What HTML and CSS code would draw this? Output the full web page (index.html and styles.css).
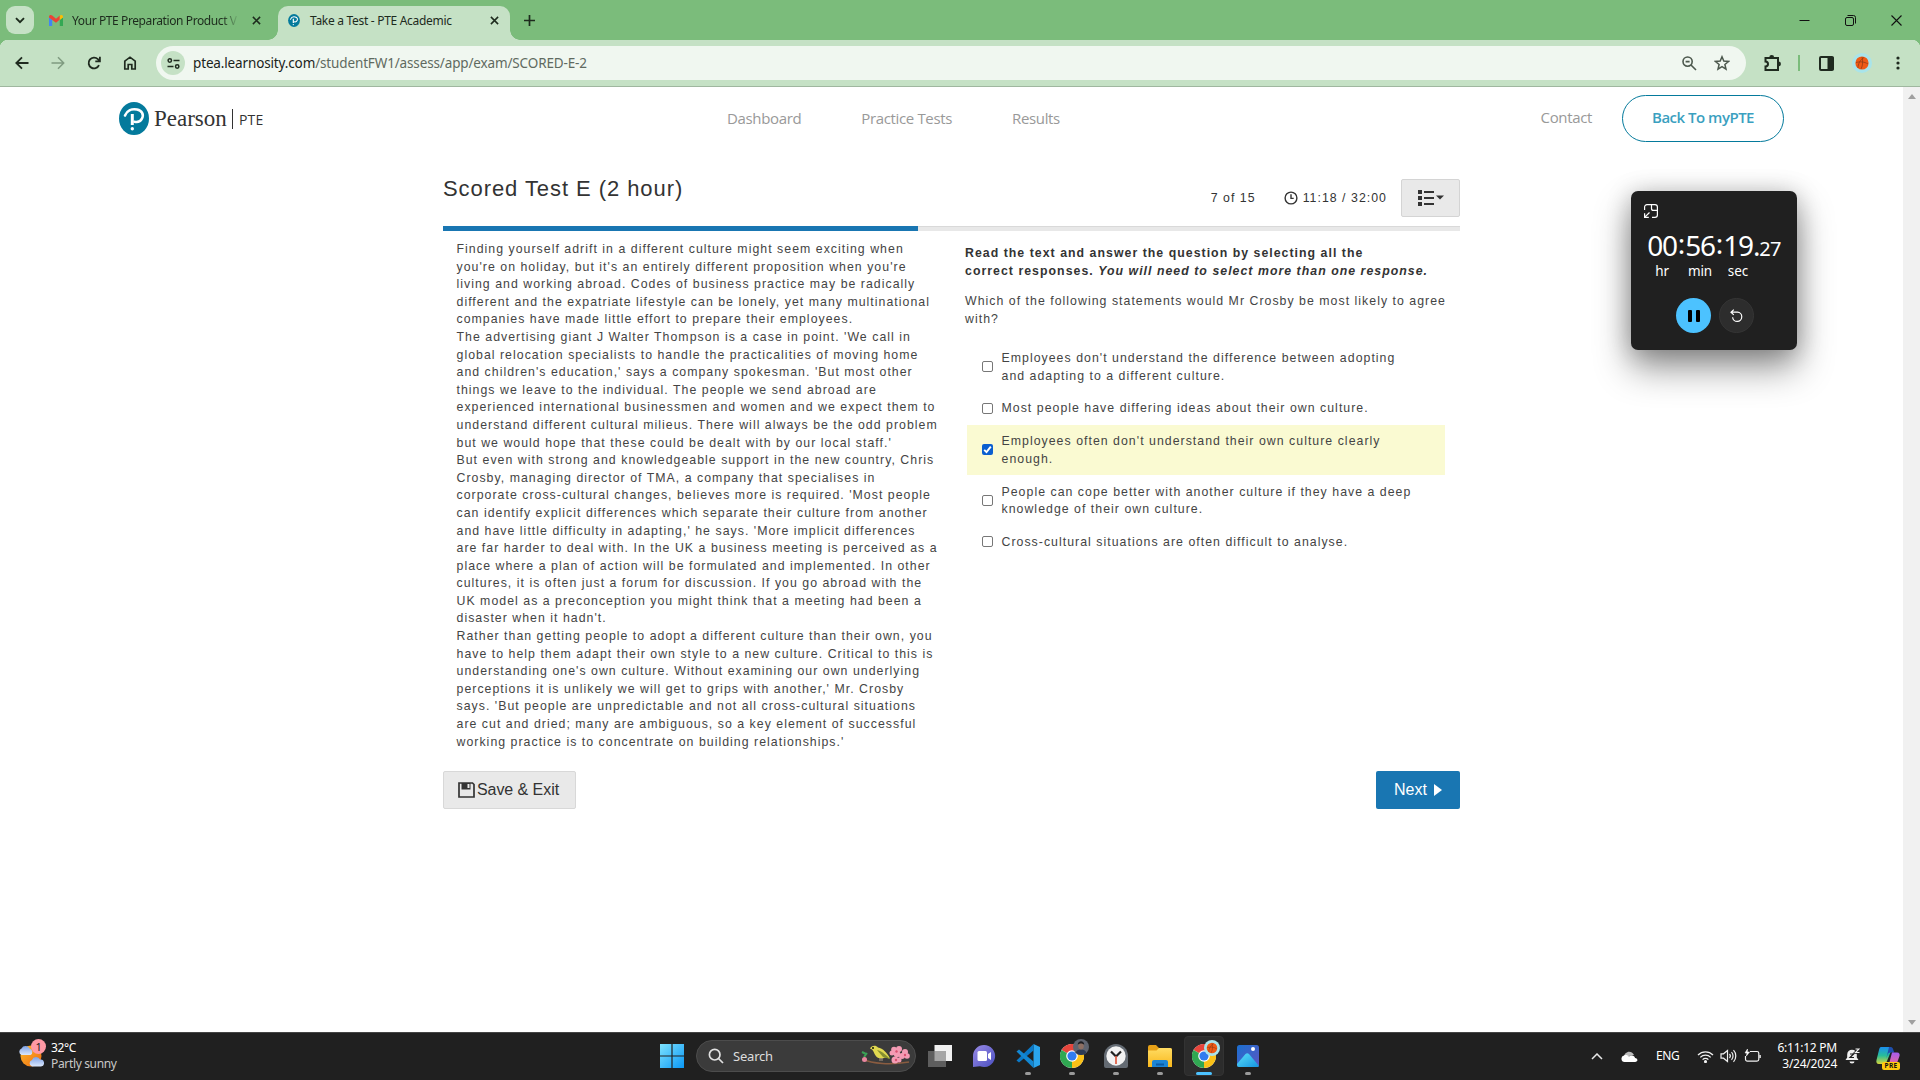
FILE: index.html
```html
<!DOCTYPE html>
<html lang="en">
<head>
<meta charset="utf-8">
<title>Take a Test - PTE Academic</title>
<link rel="stylesheet" href="styles.css">
</head>
<body>
<svg width="0" height="0" class="defs" aria-hidden="true">
  <defs>
    <linearGradient id="win" x1="0" y1="0" x2="1" y2="1"><stop offset="0" stop-color="#7ee3ff"/><stop offset="1" stop-color="#0a97f5"/></linearGradient>
    <linearGradient id="sun" x1="0" y1="0" x2="1" y2="1"><stop offset="0" stop-color="#fdbb2c"/><stop offset="1" stop-color="#ee6a10"/></linearGradient>
    <linearGradient id="cloud" x1="0" y1="0" x2="0" y2="1"><stop offset="0" stop-color="#7ea2e6"/><stop offset="1" stop-color="#dce8fc"/></linearGradient>
    <linearGradient id="chat" x1="0" y1="0" x2="1" y2="1"><stop offset="0" stop-color="#9a8be6"/><stop offset="1" stop-color="#4a4fc0"/></linearGradient>
    <linearGradient id="folder" x1="0" y1="0" x2="0" y2="1"><stop offset="0" stop-color="#ffdc63"/><stop offset="1" stop-color="#f9b81c"/></linearGradient>
    <linearGradient id="photo" x1="0" y1="0" x2="1" y2="1"><stop offset="0" stop-color="#1a6fd0"/><stop offset="1" stop-color="#5d56c0"/></linearGradient>
    <linearGradient id="hill" x1="0" y1="0" x2="1" y2="1"><stop offset="0" stop-color="#5be0fa"/><stop offset="1" stop-color="#1593e0"/></linearGradient>
    <linearGradient id="copA" x1="0" y1="0" x2="0" y2="1"><stop offset="0" stop-color="#1b8ff0"/><stop offset=".5" stop-color="#27bd9a"/><stop offset="1" stop-color="#d6d63a"/></linearGradient>
    <linearGradient id="copB" x1="0" y1="0" x2="0" y2="1"><stop offset="0" stop-color="#a45cf0"/><stop offset="1" stop-color="#f36a8c"/></linearGradient>
    <symbol id="x" viewBox="0 0 10 10"><path d="M1 1l8 8M9 1l-8 8" fill="none" stroke="currentColor" stroke-width="1.7"/></symbol>
    <symbol id="pearson" viewBox="0 0 30 33"><ellipse cx="15" cy="16.5" rx="15" ry="16.5" fill="#047a9c"/><path d="M6 13.500C8 8.500 13 6.500 18 7.500c5 1 7 5 5 9-1.500 3-4.500 4-7.500 3.300" fill="none" stroke="#fff" stroke-width="2.600" stroke-linecap="round"/><path d="M13.300 12v11" stroke="#fff" stroke-width="3"/><circle cx="13.300" cy="26.800" r="1.700" fill="#fff"/></symbol>
    <symbol id="chrome" viewBox="0 0 24 24"><circle cx="12" cy="12" r="12" fill="#fff"/><path d="M12 12L1.600 6A12 12 0 0 1 22.400 6z" fill="#e8453c"/><path d="M12 12L22.400 6A12 12 0 0 1 12 24z" fill="#fbc116"/><path d="M12 12L12 24A12 12 0 0 1 1.600 6z" fill="#30a852"/><circle cx="12" cy="12" r="5.800" fill="#fff"/><circle cx="12" cy="12" r="4.600" fill="#2f7cf0"/></symbol>
    <symbol id="ball" viewBox="0 0 20 20"><circle cx="10" cy="10" r="10" fill="#a9e4ea"/><circle cx="10" cy="10" r="6.600" fill="#f05a14"/><path d="M4 9.500c4-1 8-1 12 1.500M10 4c1 4 1 8-1 12M6 15c0-4 2-8 6-10.500" fill="none" stroke="#8a3a14" stroke-width=".7"/></symbol>
  </defs>
</svg>

<header class="tabs">
  <button class="tab-search"><svg width="10" height="7" viewBox="0 0 10 7"><path d="M1 1.200l4 4 4-4" fill="none" stroke="#1d2b1d" stroke-width="1.900"/></svg></button>
  <div class="tab">
    <svg width="14" height="11" viewBox="0 0 14 11"><path d="M0 2.500V11h3.200V4.500z" fill="#4285f4"/><path d="M14 2.500V11h-3.200V4.500z" fill="#34a853"/><path d="M0 1.800C0 0 2-.5 3.200.6L7 3.700 10.800.6V4.600L7 7.700 0 2.600z" fill="#ea4335"/><path d="M10.800.6C12-.5 14 0 14 1.800v.8l-3.200 2.300z" fill="#fbbc04"/></svg>
    <span class="tab-title fade">Your PTE Preparation Product V</span>
    <svg class="close" width="9" height="9"><use href="#x"/></svg>
  </div>
  <div class="tab active">
    <svg width="12" height="13"><use href="#pearson"/></svg>
    <span class="tab-title">Take a Test - PTE Academic</span>
    <svg class="close" width="9" height="9"><use href="#x"/></svg>
  </div>
  <svg class="new-tab" width="11" height="11" viewBox="0 0 11 11"><path d="M5.500 0v11M0 5.500h11" stroke="#1d2b1d" stroke-width="1.700"/></svg>
  <div class="window-buttons">
    <svg width="11" height="11"><path d="M.5 5.500h10" stroke="#111"/></svg>
    <svg width="11" height="11" fill="none" stroke="#111"><rect x=".5" y="2.500" width="8" height="8" rx="1.500"/><path d="M2.500 .5h6a2 2 0 0 1 2 2v6"/></svg>
    <svg width="11" height="11"><path d="M.5 .5l10 10M10.500 .5l-10 10" stroke="#111" stroke-width="1.100"/></svg>
  </div>
</header>

<nav class="toolbar">
  <div class="nav-icons">
    <svg width="14" height="14" viewBox="0 0 14 14" fill="none" stroke="#1f2a1f" stroke-width="1.800"><path d="M13.500 7H1.500M7 1.300L1.300 7 7 12.700"/></svg>
    <svg width="14" height="14" viewBox="0 0 14 14" fill="none" stroke="#7f9b80" stroke-width="1.500"><path d="M.5 7h12M7 1.300L12.700 7 7 12.700"/></svg>
    <svg width="14" height="14" viewBox="0 0 14 14" fill="none" stroke="#1f2a1f" stroke-width="1.800"><path d="M12 9.200A5.400 5.400 0 1 1 10.900 3.200L12.600 5M12.900.8v4.600H8.300"/></svg>
    <svg width="14" height="14" viewBox="0 0 14 14" fill="none" stroke="#1f2a1f" stroke-width="1.700"><path d="M1.800 5.200L7 1.200l5.200 4V13H8.800V8.500H5.200V13H1.800z"/></svg>
  </div>
  <div class="omnibox">
    <span class="site-chip"><svg width="13" height="11" viewBox="0 0 13 11" fill="none" stroke="#1f2a1f" stroke-width="1.500"><circle cx="2.800" cy="2.500" r="1.700"/><path d="M6.500 2.500h6M.5 8.500h6"/><circle cx="10.200" cy="8.500" r="1.700"/></svg></span>
    <span class="url"><b>ptea.learnosity.com</b>/studentFW1/assess/app/exam/SCORED-E-2</span>
    <svg class="glass" width="15" height="15" viewBox="0 0 15 15" fill="none" stroke="#4c584d" stroke-width="1.600"><circle cx="5.600" cy="5.600" r="4.600"/><path d="M9 9l5 5M3.600 5.600h4"/></svg>
    <svg class="star" width="16" height="16" viewBox="0 0 16 16" fill="none" stroke="#4c584d" stroke-width="1.500"><path d="M8 1.800l1.800 4.300 4.700.4-3.600 3 1.100 4.600L8 11.700l-4 2.400 1.100-4.600-3.600-3 4.700-.4z"/></svg>
  </div>
  <div class="actions">
    <svg width="17" height="17" viewBox="0 0 17 17" fill="none" stroke="#1f2a1f" stroke-width="2"><path d="M1.500 3h12.500v12H1.500v-3.500a2.300 2.300 0 0 0 0-5z"/><path d="M6 2.500a1.700 1.700 0 0 1 3.400 0M14.500 7.300a1.700 1.700 0 0 1 0 3.400" fill="#1f2a1f" stroke-width="1.500"/></svg>
    <i class="rule"></i>
    <svg class="panel" width="15" height="15" viewBox="0 0 15 15"><rect x="1" y="1" width="13" height="13" rx="1" fill="none" stroke="#1f2a1f" stroke-width="2"/><path d="M8.500 1h6v13h-6z" fill="#1f2a1f"/></svg>
    <svg class="profile" width="20" height="20"><use href="#ball"/></svg>
    <svg class="more" width="4" height="14" fill="#1f2a1f"><circle cx="2" cy="2" r="1.600"/><circle cx="2" cy="7" r="1.600"/><circle cx="2" cy="12" r="1.600"/></svg>
  </div>
</nav>

<div class="viewport">
  <div class="page">
    <div class="site-header">
      <div class="brand"><svg width="30" height="33"><use href="#pearson"/></svg><span class="brand-name">Pearson</span><i></i><span class="brand-sub">PTE</span></div>
      <div class="links"><a>Dashboard</a><a>Practice Tests</a><a>Results</a></div>
      <div class="side-links"><a class="contact">Contact</a><a class="pill">Back To myPTE</a></div>
    </div>

    <main class="exam">
      <div class="exam-head">
        <h1>Scored Test E (2 hour)</h1>
        <div class="status">
          <span class="count">7 of 15</span>
          <span class="time"><svg width="14" height="14" viewBox="0 0 14 14" fill="none" stroke="#333" stroke-width="1.400"><circle cx="7" cy="7" r="5.900"/><path d="M7 3.300V7.400H9.700"/></svg><span>11:18 / 32:00</span></span>
          <button class="menu"><svg width="26" height="16" viewBox="0 0 26 16" fill="#333"><path d="M0 0h4v4H0zM0 6h4v4H0zM0 12h4v4H0zM6 1h10v2H6zM6 7h10v2H6zM6 13h10v2H6zM18 5.500h8l-4 4z"/></svg></button>
        </div>
      </div>
      <div class="progress"><div style="width:46.7%"></div></div>
      <div class="columns">
        <div class="passage">
          <p>Finding yourself adrift in a different culture might seem exciting when<br>you're on holiday, but it's an entirely different proposition when you're<br>living and working abroad. Codes of business practice may be radically<br>different and the expatriate lifestyle can be lonely, yet many multinational<br>companies have made little effort to prepare their employees.</p>
          <p>The advertising giant J Walter Thompson is a case in point. 'We call in<br>global relocation specialists to handle the practicalities of moving home<br>and children's education,' says a company spokesman. 'But most other<br>things we leave to the individual. The people we send abroad are<br>experienced international businessmen and women and we expect them to<br>understand different cultural milieus. There will always be the odd problem<br>but we would hope that these could be dealt with by our local staff.'</p>
          <p>But even with strong and knowledgeable support in the new country, Chris<br>Crosby, managing director of TMA, a company that specialises in<br>corporate cross-cultural changes, believes more is required. 'Most people<br>can identify explicit differences which separate their culture from another<br>and have little difficulty in adapting,' he says. 'More implicit differences<br>are far harder to deal with. In the UK a business meeting is perceived as a<br>place where a plan of action will be formulated and implemented. In other<br>cultures, it is often just a forum for discussion. If you go abroad with the<br>UK model as a preconception you might think that a meeting had been a<br>disaster when it hadn't.</p>
          <p>Rather than getting people to adopt a different culture than their own, you<br>have to help them adapt their own style to a new culture. Critical to this is<br>understanding one's own culture. Without examining our own underlying<br>perceptions it is unlikely we will get to grips with another,' Mr. Crosby<br>says. 'But people are unpredictable and not all cross-cultural situations<br>are cut and dried; many are ambiguous, so a key element of successful<br>working practice is to concentrate on building relationships.'</p>
        </div>
        <div class="question">
          <p class="instruction">Read the text and answer the question by selecting all the<br>correct responses. <em>You will need to select more than one response.</em></p>
          <p class="stem">Which of the following statements would Mr Crosby be most likely to agree<br>with?</p>
          <ul class="options">
            <li><i class="box"></i><span>Employees don't understand the difference between adopting<br>and adapting to a different culture.</span></li>
            <li><i class="box"></i><span>Most people have differing ideas about their own culture.</span></li>
            <li class="selected"><i class="box"><svg width="11" height="11" viewBox="0 0 11 11"><path d="M2.200 5.800l2.300 2.300 4.300-5.500" fill="none" stroke="#fff" stroke-width="1.900"/></svg></i><span>Employees often don't understand their own culture clearly<br>enough.</span></li>
            <li><i class="box"></i><span>People can cope better with another culture if they have a deep<br>knowledge of their own culture.</span></li>
            <li><i class="box"></i><span>Cross-cultural situations are often difficult to analyse.</span></li>
          </ul>
        </div>
      </div>
      <div class="exam-foot">
        <button class="save"><svg width="17" height="16" viewBox="0 0 17 16"><path d="M1 1h13.500L16 2.500V15H1z" fill="none" stroke="#333" stroke-width="1.700"/><path d="M3.500 1h9v6.500h-9z" fill="#333"/><path d="M9.500 2h2v4h-2z" fill="#e9e9e9"/></svg>Save &amp; Exit</button>
        <button class="next">Next<svg width="8" height="12"><path d="M0 0l8 6-8 6z" fill="#fff"/></svg></button>
      </div>
    </main>
  </div>
  <div class="scrollbar">
    <svg width="8" height="5"><path d="M0 5l4-5 4 5z" fill="#a0a0a0"/></svg>
    <svg width="8" height="5"><path d="M0 0l4 5 4-5z" fill="#a0a0a0"/></svg>
  </div>
</div>

<aside class="timer">
  <svg width="14" height="14" viewBox="0 0 14 14" fill="none" stroke="#fff" stroke-width="1.200"><path d="M.6 6V3A2.400 2.400 0 0 1 3 .6h8A2.400 2.400 0 0 1 13.400 3v8a2.400 2.400 0 0 1-2.400 2.400H8M7.500.6v3.800a2 2 0 0 0 2 2h3.900M5.500 8.500L.8 13.200M.6 9.200v4.200h4.200"/></svg>
  <div class="digits">
    <div><b>00</b><small>hr</small></div><i>:</i><div><b>56</b><small>min</small></div><i>:</i><div><b>19</b><small>sec</small></div><span>.<em>27</em></span>
  </div>
  <div class="controls">
    <span class="pause"><svg width="12" height="12"><rect width="4" height="12" rx="1"/><rect x="8" width="4" height="12" rx="1"/></svg></span>
    <span class="reset"><svg width="13" height="13" viewBox="0 0 13 13" fill="none" stroke="#fff" stroke-width="1.200"><path d="M1 3.200h6.500a4.600 4.600 0 1 1-4.900 5M3.800.6L1 3.200l2.800 2.700"/></svg></span>
  </div>
</aside>

<footer class="taskbar">
  <div class="weather">
    <span class="weather-icon"><svg width="26" height="24" viewBox="0 0 26 24"><circle cx="13" cy="12" r="10.500" fill="url(#sun)"/><path d="M3.500 11a3.500 3.500 0 0 1 0-6.500 4.500 4.500 0 0 1 8 0 3.500 3.500 0 0 1 1 6.500z" fill="url(#cloud)"/><path d="M14 22.500a3.400 3.400 0 0 1 0-6.500 4.300 4.300 0 0 1 8-.5 3.500 3.500 0 0 1 1 7z" fill="url(#cloud)"/></svg><b>1</b></span>
    <span class="weather-text">32°C<br><em>Partly sunny</em></span>
  </div>
  <div class="apps">
    <svg class="start" width="24" height="24" viewBox="0 0 24 24" fill="url(#win)"><path d="M0 0h11.400v11.400H0zM12.600 0H24v11.400H12.600zM0 12.600h11.400V24H0zM12.600 12.600H24V24H12.600z"/></svg>
    <div class="search">
      <svg width="16" height="16" viewBox="0 0 16 16" fill="none" stroke="#e0e0e0" stroke-width="1.700"><circle cx="6.700" cy="6.700" r="5.300"/><path d="M10.500 10.500l4.500 4.500"/></svg>
      <span>Search</span>
      <svg class="bird" width="51" height="22" viewBox="0 0 51 22"><path d="M3 14c9 5 28 6 46 3" fill="none" stroke="#8a5c40" stroke-width="1.600"/><path d="M2 7l4 2M4 12l3-4" stroke="#3aa155" stroke-width="2"/><circle cx="4.500" cy="14.500" r="2.500" fill="#e9869f"/><path d="M10 3.500c1-3 6-4 8-1 5 1 9 5 12 11l-5-1c-3 2-8 1-9.500-2-1.500-2-1.500-4-3.500-6z" fill="#e0d850"/><path d="M17 5c5 1 9 5 13 9l-7-2z" fill="#868f30"/><path d="M20 13v3M22 13v3" stroke="#a98"/><g fill="#f49bb4"><circle cx="34" cy="4.500" r="2.800"/><circle cx="39" cy="4" r="3"/><circle cx="37" cy="9" r="3.200"/><circle cx="32" cy="8" r="2.500"/><circle cx="45" cy="7" r="3"/><circle cx="47" cy="11" r="2.800"/><circle cx="42" cy="11" r="3"/><circle cx="35" cy="15" r="3.500"/><circle cx="39" cy="15" r="2.500"/></g><g fill="#d9506f"><circle cx="36.500" cy="6.500" r="1.200"/><circle cx="36" cy="15" r="1.200"/><circle cx="45" cy="10" r="1.200"/></g><circle cx="13" cy="3" r=".9"/></svg>
    </div>
    <div class="app"><svg width="24" height="22" viewBox="0 0 24 22"><path d="M6.500 0H24v16H6.500z" fill="#f1f1f1"/><path d="M0 6h18v16H0z" fill="#5e5e5e"/><path d="M6.500 6H18v10H6.500z" fill="#a5a5a5"/></svg></div>
    <div class="app"><svg width="24" height="24" viewBox="0 0 24 24"><path d="M12 1a11 11 0 1 1-4 21.200l-7 .8V12A11 11 0 0 1 12 1z" fill="url(#chat)"/><rect x="5.500" y="7" width="9.500" height="10" rx="1.500" fill="#fff"/><path d="M16 10l3-2v8l-3-2z" fill="#fff"/></svg></div>
    <div class="app run"><svg width="24" height="24" viewBox="0 0 24 24"><path d="M17.500 0L24 3v18l-6.500 3z" fill="#2aa5ee"/><path d="M17.500 0v6.500L3 18.500.5 16.500z" fill="#0a79c8"/><path d="M17.500 24v-6.500L3 5.500.5 7.500z" fill="#1387d2"/></svg></div>
    <div class="app run"><svg width="24" height="24"><use href="#chrome"/></svg><svg class="badge" width="16" height="16"><circle cx="8" cy="8" r="8" fill="#5f6470"/><path d="M2.500 13.800c1-4.500 10-4.500 11 0a8 8 0 0 1-11 0z" fill="#2c3a54"/><ellipse cx="8" cy="7" rx="2.800" ry="3.600" fill="#8d6f63"/><path d="M4.800 6c-.4-5 6.800-5 6.400 0-1-2-5.400-2-6.400 0z" fill="#1d1d22"/></svg></div>
    <div class="app run"><svg width="24" height="24" viewBox="0 0 24 24"><path d="M0 12a12 12 0 0 1 24 0v10a2 2 0 0 1-2 2H2a2 2 0 0 1-2-2z" fill="#646b73"/><circle cx="12" cy="12" r="9.700" fill="#f2f2f2"/><path d="M12 12.500L7 7.500M12 12.500l5-5" stroke="#222" stroke-width="2.200"/><path d="M12 12v8" stroke="#e05a40" stroke-width="1.700"/></svg></div>
    <div class="app run"><svg width="24" height="22" viewBox="0 0 24 22"><path d="M0 2a2 2 0 0 1 2-2h6l3 3h11a2 2 0 0 1 2 2v4H0z" fill="#e7a117"/><path d="M0 5.500h8.500L11 3h11a2 2 0 0 1 2 2v17H0z" fill="url(#folder)"/><path d="M4 22v-5a2 2 0 0 1 2-2h12a2 2 0 0 1 2 2v5z" fill="#1c84d4"/><path d="M8 18.500h8v2H8z" fill="#0b5ba6"/></svg></div>
    <div class="app run current"><svg width="24" height="24"><use href="#chrome"/></svg><svg class="badge" width="16" height="16"><use href="#ball"/></svg></div>
    <div class="app run"><svg width="22" height="22" viewBox="0 0 22 22"><rect width="22" height="22" rx="2.500" fill="url(#photo)"/><path d="M0 19L8.500 9a2.500 2.500 0 0 1 3.500 0l10 12a2 2 0 0 1-1 1H2a2 2 0 0 1-2-2z" fill="url(#hill)"/><circle cx="16" cy="4" r="2" fill="#fff"/></svg></div>
  </div>
  <div class="tray">
    <svg class="chevron" width="12" height="7"><path d="M1 6l5-5 5 5" fill="none" stroke="#e8e8e8" stroke-width="1.500"/></svg>
    <svg class="onedrive" width="17" height="11" viewBox="0 0 17 11"><path d="M3 6C3 1 10-2 13 4z" fill="#bdbdbd"/><path d="M3.500 11A3.300 3.300 0 0 1 3 4.500c2-1 4 0 5 1 2-2 6-1 6 1.500 3.500.5 3 4 0 4z" fill="#fff"/></svg>
    <span class="lang">ENG</span>
    <svg class="wifi" width="17" height="13" viewBox="0 0 17 13" fill="none" stroke="#f0f0f0" stroke-width="1.300"><path d="M1 5a10.500 10.500 0 0 1 15 0M3.300 7.400a7.300 7.300 0 0 1 10.400 0M5.600 9.600a4.200 4.200 0 0 1 5.800 0"/><circle cx="8.500" cy="11.600" r=".9" fill="#fff"/></svg>
    <svg class="sound" width="17" height="14" viewBox="0 0 17 14" fill="none" stroke="#f0f0f0" stroke-width="1.200"><path d="M1 4.800h2.500L7.500 1.500v11L3.500 9.200H1zM9.500 5a3 3 0 0 1 0 4M11.500 3.200a5.500 5.500 0 0 1 0 7.600M13.500 1.200a8.500 8.500 0 0 1 0 11.600"/></svg>
    <svg class="battery" width="17" height="14" viewBox="0 0 17 14" fill="none" stroke="#f0f0f0" stroke-width="1.200"><path d="M6 2.500h7a1.800 1.800 0 0 1 1.800 1.800v6A1.800 1.800 0 0 1 13 12.100H3.300a1.800 1.800 0 0 1-1.800-1.800V7M16.200 6v3"/><path d="M3.500 0L1 4h2l-.6 3L5.500 3H3.300z" fill="#fff" stroke-width=".6"/></svg>
    <span class="clock">6:11:12 PM<br>3/24/2024</span>
    <svg class="bell" width="15" height="16" viewBox="0 0 15 16"><path d="M.5 12l1.700-2.500V6.500a4.800 4.800 0 0 1 9.600 0v3l1.700 2.500zM4.500 13.500h5a2.500 2 0 0 1-5 0z" fill="#f0f0f0"/><path d="M5 6h3.600L5 9.500h4" fill="none" stroke="#202020" stroke-width="1.200"/><path d="M10.500 1h3.500l-3.500 3.500h4" fill="none" stroke="#202020" stroke-width="2.600"/><path d="M10.500 1h3.500l-3.500 3.500h4" fill="none" stroke="#f0f0f0" stroke-width="1.100"/></svg>
    <span class="copilot"><svg width="24" height="19" viewBox="0 0 24 19"><path d="M5 0h8c2 0 3 1 2.500 3L11 14c-.6 2-2 3-4 3H3c-2.500 0-3-2-2.500-4L3 3C3.500 1 4 0 5 0z" fill="url(#copA)"/><path d="M13 0h1.500c2 0 2.500 1.500 3 3.500l.8 2H14.500c-2 0-2.500 1-3 2.500l-1.300 4z" fill="#1f4fae"/><path d="M16 5.500h5c2.500 0 3 2 2.500 3.500L21 16c-.6 2-2 3-4 3h-7c2 0 2.600-1 3-2z" fill="url(#copB)"/></svg><b>PRE</b></span>
  </div>
</footer>
</body>
</html>
```
FILE: styles.css
```css
* { box-sizing: border-box; margin: 0; padding: 0; }
body { width: 1920px; height: 1080px; overflow: hidden; display: flex; flex-direction: column; background: #fff; font-family: "Noto Sans", sans-serif; }
button { border: 0; font: inherit; display: flex; align-items: center; justify-content: center; }
svg { display: block; flex: none; }
.defs { position: absolute; }
b, i, em { font-style: inherit; font-weight: inherit; }

/* Browser tab strip */
.tabs { height: 40px; flex: none; background: #7bbc7b; display: flex; align-items: center; padding-left: 6px; color: #1d2b1d; }
.tab-search { width: 28px; height: 28px; border-radius: 9px; background: #c5e1c5; }
.tab { width: 236px; height: 34px; align-self: flex-end; display: flex; align-items: center; padding: 0 9px 6px 15px; }
.tab-title { flex: 1; margin-left: 9px; font-size: 12px; letter-spacing: -.3px; white-space: nowrap; }
.fade { margin-right: 13px; mask-image: linear-gradient(90deg, #000 90%, transparent); letter-spacing: -.4px; }
.active { width: 232px; margin-left: 8px; padding: 0 11px 6px 10px; background: #c5e1c5; border-radius: 10px 10px 0 0; position: relative; }
.active .tab-title { margin-left: 10px; }
.active::before, .active::after { content: ""; position: absolute; bottom: 0; width: 10px; height: 10px; }
.active::before { left: -10px; background: radial-gradient(circle at 0 0, transparent 9.5px, #c5e1c5 10px); }
.active::after { right: -10px; background: radial-gradient(circle at 100% 0, transparent 9.5px, #c5e1c5 10px); }
.new-tab { margin-left: 14px; }
.window-buttons { margin-left: auto; display: flex; gap: 35px; padding-right: 18px; }

/* Browser toolbar */
.toolbar { height: 47px; flex: none; background: radial-gradient(circle at 8px 8px, #c5e1c5 8px, #7bbc7b 8.500px) 0 0 / 8px 8px no-repeat, radial-gradient(circle at 0 8px, #c5e1c5 8px, #7bbc7b 8.500px) 100% 0 / 8px 8px no-repeat, #c5e1c5; border-bottom: 1px solid #9fb79f; display: flex; align-items: center; padding: 0 20px 0 15px; }
.nav-icons { display: flex; gap: 22px; width: 141px; }
.omnibox { width: 1590px; height: 34px; border-radius: 17px; background: #f0f7f0; display: flex; align-items: center; padding: 0 16px 0 5px; }
.site-chip { width: 24px; height: 24px; border-radius: 50%; background: #c5e1c5; display: grid; place-items: center; }
.url { margin-left: 8px; padding-bottom: 1px; flex: 1; font-size: 13.5px; color: #5f6a60; letter-spacing: -.14px; }
.url b { color: #1b241b; }
.glass { margin-right: 17px; }
.actions { margin-left: 18px; flex: 1; display: flex; align-items: center; }
.rule { width: 2px; height: 16px; background: #7bbc7b; margin-left: 17px; }
.panel { margin-left: 19px; }
.profile { margin-left: 18px; }
.more { margin-left: 24px; }

/* Site header */
.viewport { flex: 1; display: flex; min-height: 0; }
.page { flex: 1; }
.scrollbar { width: 17px; background: #f1f1f1; display: flex; flex-direction: column; align-items: center; justify-content: space-between; padding: 7px 0; }
.site-header { height: 63px; display: flex; align-items: center; padding: 0 119px; font-family: "Open Sans", sans-serif; font-size: 15px; color: #999; }
.brand { width: 608px; display: flex; align-items: center; color: #333; }
.brand-name { font: 23px "Liberation Serif", serif; margin-left: 5px; width: 73px; }
.brand i { width: 1px; height: 20px; background: #333; margin: 1px 6px 0 5px; }
.brand-sub { font-size: 14px; font-weight: 500; padding-top: 2px; letter-spacing: .2px; }
.links { flex: 1; display: flex; gap: 60px; letter-spacing: -.35px; padding-bottom: 2px; }
.side-links { display: flex; align-items: center; gap: 30px; letter-spacing: -.35px; }
.contact { padding-bottom: 4px; }
.pill { width: 162px; height: 47px; border: 1px solid #047a9c; border-radius: 24px; display: grid; place-items: center; padding-bottom: 3px; color: #3aa0c0; font-weight: 600; letter-spacing: -.5px; }

/* Exam */
.exam { width: 1017px; margin-left: 443px; font-family: "Liberation Sans", sans-serif; color: #333; }
.exam-head { height: 76px; display: flex; justify-content: space-between; }
h1 { font-size: 22px; font-weight: 400; letter-spacing: .93px; line-height: 26px; padding-top: 26px; }
.status { display: flex; align-items: center; height: 38px; margin-top: 29px; font-size: 12.320px; letter-spacing: 1.030px; white-space: nowrap; }
.time { display: flex; align-items: center; gap: 5px; margin: 0 14px 0 28px; }
.menu { width: 59px; height: 38px; background: #e9e9e9; border: 1px solid #d4d4d4; border-radius: 2px; }
.progress { height: 5px; background: #e8e8e8; border-top: 1px solid #d9d9d9; }
.progress div { height: 5px; margin-top: -1px; background: #1976b2; }
.columns { display: flex; height: 540px; font-size: 12.320px; line-height: 17.600px; letter-spacing: 1.030px; color: #444; white-space: nowrap; }
.passage { width: 522px; flex: none; padding: 10px 0 0 13.500px; }
.question { flex: 1; min-width: 0; padding-top: 14px; }
.instruction { font-weight: 700; color: #333; }
.instruction em { font-style: italic; }
.stem { margin-top: 13px; }
.options { list-style: none; margin: 13px 15px 0 2px; }
.options li { display: flex; align-items: center; padding: 7.600px 0 7.600px 15px; }
.options li span { padding-top: 1px; margin-bottom: -1px; }
.options .selected { background: #fafad2; }
.box { width: 11px; height: 11px; margin-right: 8.500px; flex: none; border: 1px solid #777; border-radius: 2px; background: #fff; }
.selected .box { border: 0; background: #0b5fd0; }
.exam-foot { display: flex; justify-content: space-between; font-size: 16px; }
.save { width: 133px; height: 38px; background: #e9e9e9; border: 1px solid #d8d8d8; border-radius: 2px; gap: 2px; color: #333; padding-right: 2px; letter-spacing: -.05px; }
.next { width: 84px; height: 38px; background: #1976b2; border-radius: 2px; color: #fff; gap: 7px; }

/* Stopwatch window, floats above the browser */
.timer { position: absolute; left: 1631px; top: 191px; width: 166px; height: 159px; border-radius: 7px; background: #202020; color: #fff; padding: 13px 0 0 13px; box-shadow: 0 18px 36px rgba(0,0,0,.42), 0 2px 24px rgba(0,0,0,.22); }
.digits { display: flex; margin: 10px 0 0 3px; height: 52px; font-size: 28px; line-height: 34px; letter-spacing: -1.200px; }
.digits div { width: 30px; display: flex; flex-direction: column; align-items: center; }
.digits b { height: 34px; }
.digits small { font-size: 13.500px; line-height: 18px; letter-spacing: -.1px; }
.digits i { width: 8px; line-height: 30px; text-align: center; }
.digits em { font-size: 20px; letter-spacing: -.8px; }
.controls { display: flex; gap: 8px; margin: 18px 0 0 32px; }
.controls span { width: 35px; height: 35px; border-radius: 50%; display: grid; place-items: center; }
.pause { background: #4cc2ff; }
.reset { background: #2d2d2d; border: 1px solid #353535; }

/* Taskbar */
.taskbar { height: 48px; flex: none; background: #202020; border-top: 1px solid #444; display: flex; align-items: center; padding-bottom: 1px; color: #fff; font-size: 12px; line-height: 16px; letter-spacing: -.35px; }
.weather { width: 660px; display: flex; align-items: center; padding-left: 18px; }
.weather-icon { position: relative; margin-right: 7px; }
.weather-icon b { position: absolute; right: -2px; top: -5px; width: 15px; height: 15px; border-radius: 50%; background: #ff99a4; color: #222; font-size: 11px; line-height: 15px; text-align: center; }
.weather-text, .clock { padding-bottom: 1px; }
.weather em { color: #c8c8c8; }
.apps { width: 611px; display: flex; align-items: center; }
.search { width: 220px; height: 32px; margin: 0 0 0 12px; padding: 0 4px 0 11px; border-radius: 16px; background: #3b3b3b; border: 1px solid #4c4c4c; display: flex; align-items: center; gap: 9px; font-size: 13px; color: #ddd; letter-spacing: -.2px; }
.search span { padding-bottom: 1px; }
.bird { margin-left: auto; }
.app { width: 40px; height: 40px; margin-left: 4px; flex: none; display: grid; place-items: center; position: relative; border-radius: 4px; }
.run::after { content: ""; position: absolute; bottom: 1px; left: 17px; width: 6px; height: 3px; border-radius: 2px; background: #9a9a9a; }
.current { background: #2c2c2c; border: 1px solid #333; }
.current::after { left: 11px; width: 16px; bottom: 0; background: #4cc2ff; }
.badge { position: absolute; right: 3px; top: 3px; }
.tray { flex: 1; display: flex; align-items: center; padding-left: 320px; }
.onedrive { margin-left: 18px; }
.lang { margin-left: 18px; width: 24px; }
.wifi { margin-left: 17px; }
.sound { margin-left: 6px; }
.battery { margin-left: 7px; }
.clock { margin-left: 12px; width: 64px; text-align: right; white-space: nowrap; letter-spacing: -.25px; }
.bell { margin-left: 8px; }
.copilot { margin-left: 16px; position: relative; }
.copilot b { position: absolute; right: 0; bottom: -4px; width: 18px; height: 8px; border-radius: 2px; background: #ffc90e; color: #111; font-size: 6.500px; font-weight: 700; line-height: 8px; text-align: center; letter-spacing: .3px; }
```
